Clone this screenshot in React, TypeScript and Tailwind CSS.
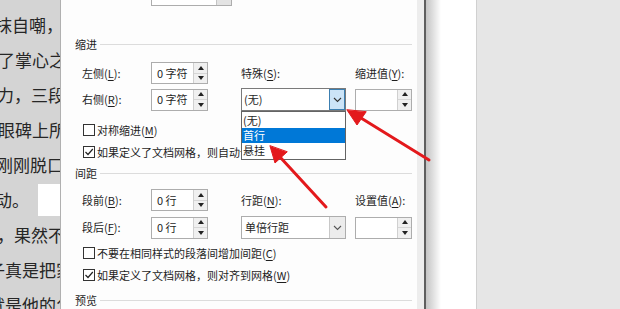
import React from 'react'

const docLines: { text: string; cls: string }[] = [
  { text: '抹自嘲，！', cls: '-ml-[5px]' },
  { text: '了掌心之', cls: '-ml-[2px]' },
  { text: '力，三段', cls: '-ml-[3px]' },
  { text: '眼碑上所', cls: '-ml-[2px]' },
  { text: '刚刚脱口', cls: '-ml-[4px]' },
]
const docLinesBottom: { text: string; cls: string }[] = [
  { text: '，果然不', cls: '-ml-[3px]' },
  { text: '子真是把家', cls: '-ml-[12px]' },
  { text: '就是他的父', cls: '-ml-[12px]' },
]

function U({ c }: { c: string }) {
  return <span className="underline underline-offset-[2px]">{c}</span>
}

function Spin() {
  return (
    <div className="flex h-full w-[14px] flex-col border-l border-[#d0d0d0] bg-[#f0f0f0]">
      <div className="flex flex-1 items-center justify-center border-b border-[#d6d6d6]">
        <div className="h-0 w-0 border-x-[3px] border-b-[4px] border-x-transparent border-b-[#222]" />
      </div>
      <div className="flex flex-1 items-center justify-center">
        <div className="h-0 w-0 border-x-[3px] border-t-[4px] border-x-transparent border-t-[#222]" />
      </div>
    </div>
  )
}

function NumInput({ value }: { value?: string }) {
  return (
    <div className="flex h-[22px] w-[57px] items-stretch border border-[#adadad] bg-white">
      <span className="flex flex-1 items-center pl-[5px]">{value}</span>
      <Spin />
    </div>
  )
}

function Chevron({ color }: { color: string }) {
  return (
    <svg width="9" height="6" viewBox="0 0 9 6">
      <path d="M1 1 L4.5 4.5 L8 1" fill="none" stroke={color} strokeWidth="1.1" />
    </svg>
  )
}

function Checkbox({ checked }: { checked?: boolean }) {
  return (
    <div className="flex h-[12px] w-[12px] shrink-0 items-center justify-center border border-[#333] bg-white">
      {checked && (
        <svg width="10" height="10" viewBox="0 0 10 10">
          <path d="M1.5 5 L4 7.5 L8.8 2" fill="none" stroke="#222" strokeWidth="1.2" />
        </svg>
      )}
    </div>
  )
}

function Section({ title }: { title: string }) {
  return (
    <div className="flex h-[16px] items-center">
      <span>{title}</span>
      <div className="ml-[3px] h-px flex-1 bg-[#dcdcdc]" />
    </div>
  )
}

function CheckRow({ checked, children, clip }: { checked?: boolean; children: React.ReactNode; clip?: boolean }) {
  return (
    <div className="ml-[8px] flex h-[16px] items-center gap-[2px] whitespace-nowrap">
      <Checkbox checked={checked} />
      <span className={clip ? 'w-[144px] overflow-hidden' : ''}>{children}</span>
    </div>
  )
}

export default function App() {
  return (
    <div className="relative flex h-[309px] w-[620px] overflow-hidden bg-white font-['Noto_Sans_CJK_SC',sans-serif] text-[11px] text-[#1e1e1e]">
      {/* 背景文档 */}
      <div className="w-[60px] shrink-0 overflow-hidden bg-[#d4d4d4] pt-[7px] text-[17px] leading-[35px] text-[#262626]">
        {docLines.map(l => (
          <div key={l.text} className={`whitespace-nowrap ${l.cls}`}>
            {l.text}
          </div>
        ))}
        <div className="-ml-[5px] flex h-[35px] items-center whitespace-nowrap">
          <span>动。</span>
          <div className="ml-[9px] h-[32px] w-[30px] shrink-0 bg-white" />
        </div>
        {docLinesBottom.map(l => (
          <div key={l.text} className={`whitespace-nowrap ${l.cls}`}>
            {l.text}
          </div>
        ))}
      </div>

      {/* 段落对话框 */}
      <div className="flex w-[366px] shrink-0">
        <div className="flex w-[357px] flex-col border-l border-[#b0b0b0] bg-[#fdfdfd] pl-[14px] pr-[5px]">
          <div className="ml-[76px] flex h-[6px] w-[81px] border-x border-b border-[#adadad] bg-white">
            <div className="flex-1" />
            <div className="w-[15px] border-l border-[#c4c4c4] bg-[#e3e3e3]" />
          </div>

          <div className="mt-[30px]">
            <Section title="缩进" />
          </div>

          <div className="mt-[10px] grid grid-cols-[69px_90px_114px_56px] items-center pl-[7px]">
            <span>左侧(<U c="L" />):</span>
            <NumInput value="0 字符" />
            <span>特殊(<U c="S" />):</span>
            <span className="whitespace-nowrap">缩进值(<U c="Y" />):</span>
          </div>

          <div className="mt-[4px] grid grid-cols-[69px_90px_114px_56px] items-center pl-[7px]">
            <span>右侧(<U c="R" />):</span>
            <NumInput value="0 字符" />
            <div className="relative h-[23px] w-[105px]">
              <div className="flex h-full items-stretch border border-[#7a7a7a] bg-white">
                <span className="flex flex-1 items-center pl-[2px]">(无)</span>
                <div className="flex w-[16px] items-center justify-center border border-[#3c7fb1] bg-[#cce4f7]">
                  <Chevron color="#333" />
                </div>
              </div>
              <div className="absolute left-0 top-full z-10 flex w-[105px] flex-col border border-[#646464] bg-white py-px">
                <div className="flex h-[15px] items-center pl-[1px]">(无)</div>
                <div className="flex h-[15px] items-center bg-[#0078d7] pl-[1px] text-white">首行</div>
                <div className="flex h-[15px] items-center pl-[1px]">悬挂</div>
              </div>
            </div>
            <NumInput />
          </div>

          <div className="mt-[11px]">
            <CheckRow>
              对称缩进(<U c="M" />)
            </CheckRow>
          </div>
          <div className="mt-[6px]">
            <CheckRow checked clip>
              如果定义了文档网格，则自动调整右缩进(<U c="D" />)
            </CheckRow>
          </div>

          <div className="mt-[5px]">
            <Section title="间距" />
          </div>

          <div className="mt-[8px] grid grid-cols-[69px_90px_114px_56px] items-center pl-[7px]">
            <span>段前(<U c="B" />):</span>
            <NumInput value="0 行" />
            <span>行距(<U c="N" />):</span>
            <span className="whitespace-nowrap">设置值(<U c="A" />):</span>
          </div>

          <div className="mt-[5px] grid grid-cols-[69px_90px_114px_56px] items-center pl-[7px]">
            <span>段后(<U c="F" />):</span>
            <NumInput value="0 行" />
            <div className="flex h-[23px] w-[105px] items-stretch border border-[#adadad] bg-white">
              <span className="flex flex-1 items-center pl-[3px]">单倍行距</span>
              <div className="flex w-[16px] items-center justify-center border-l border-[#c8c8c8] bg-[#ececec]">
                <Chevron color="#555" />
              </div>
            </div>
            <NumInput />
          </div>

          <div className="mt-[6px]">
            <CheckRow>
              不要在相同样式的段落间增加间距(<U c="C" />)
            </CheckRow>
          </div>
          <div className="mt-[6px]">
            <CheckRow checked>
              如果定义了文档网格，则对齐到网格(<U c="W" />)
            </CheckRow>
          </div>

          <div className="mt-[9px]">
            <Section title="预览" />
          </div>
        </div>
        <div className="w-[7px] bg-[#ededed]" />
        <div className="w-[2px] bg-[#5e5e5e]" />
      </div>

      {/* 右侧空白与灰色区域 */}
      <div className="w-[50px] shrink-0 bg-gradient-to-r from-[#c4c4c4] via-white via-[30%] to-white" />
      <div className="flex-1 border-l border-[#d0d0d0] bg-[#e6e6e6]" />

      {/* 红色箭头 */}
      <svg className="pointer-events-none absolute left-0 top-0 z-20" width="620" height="309" viewBox="0 0 620 309">
        <g fill="#e3191c" stroke="#e3191c" strokeLinecap="round">
          <line x1="361" y1="118" x2="429" y2="160" strokeWidth="3" />
          <polygon points="347,110 357,125 366,112" strokeWidth="1" strokeLinejoin="round" />
          <line x1="280" y1="157" x2="326" y2="207" strokeWidth="3" />
          <polygon points="270,146 275,163 287,152" strokeWidth="1" strokeLinejoin="round" />
        </g>
      </svg>
    </div>
  )
}
